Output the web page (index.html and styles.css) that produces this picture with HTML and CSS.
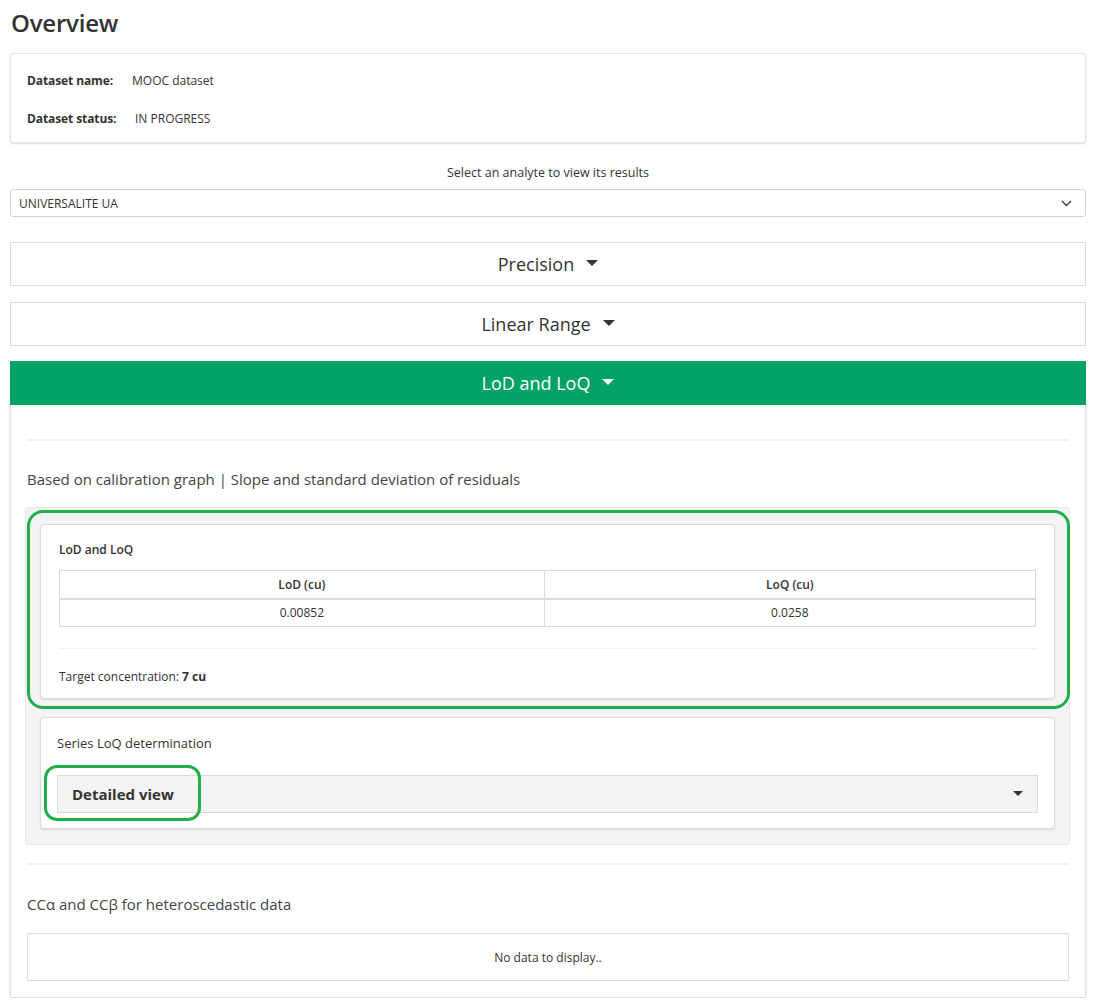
FILE: index.html
```html
<!DOCTYPE html>
<html>
<head>
<meta charset="utf-8">
<link rel="stylesheet" href="styles.css">
</head>
<body>
<div class="page">
  <h1 class="title">Overview</h1>

  <div class="card info">
    <div class="info-row"><span class="label">Dataset name:</span><span class="val">MOOC dataset</span></div>
    <div class="info-row"><span class="label">Dataset status:</span><span class="val val2">IN PROGRESS</span></div>
  </div>

  <div class="select-label">Select an analyte to view its results</div>
  <div class="select">
    <span>UNIVERSALITE UA</span>
    <svg class="chev" width="11" height="7" viewBox="0 0 11 7"><path d="M1 1 L5.5 5.5 L10 1" fill="none" stroke="#333" stroke-width="1.3"/></svg>
  </div>

  <div class="panel"><div class="panel-head">Precision <span class="caret"></span></div></div>
  <div class="panel"><div class="panel-head">Linear Range <span class="caret"></span></div></div>
  <div class="panel open">
    <div class="panel-head active">LoD and LoQ <span class="caret white"></span></div>
    <div class="panel-body">
      <hr class="sep">
      <div class="section-title">Based on calibration graph | Slope and standard deviation of residuals</div>
      <div class="well">
        <div class="box box1">
          <div class="box-title">LoD and LoQ</div>
          <table class="tbl">
            <thead><tr><th>LoD (cu)</th><th>LoQ (cu)</th></tr></thead>
            <tbody><tr><td>0.00852</td><td>0.0258</td></tr></tbody>
          </table>
          <hr class="sep small">
          <div class="target">Target concentration: <b>7 cu</b></div>
        </div>
        <div class="box box2">
          <div class="box-title2">Series LoQ determination</div>
          <div class="detail">
            <span>Detailed view</span>
            <span class="caret small"></span>
          </div>
          <div class="mark mark2"></div>
        </div>
        <div class="mark mark1"></div>
      </div>
      <hr class="sep sep2">
      <div class="section-title t2">CCα and CCβ for heteroscedastic data</div>
      <div class="nodata">No data to display..</div>
    </div>
  </div>
</div>
</body>
</html>
```

FILE: styles.css
```css
* { box-sizing: border-box; }
html, body { margin: 0; padding: 0; background: #fff; }
body {
  font-family: "Open Sans", "Noto Sans", sans-serif;
  color: #333;
}
.page { padding: 0 15px 0 10px; }
.title {
  font-size: 24px;
  font-weight: 600;
  margin: 0;
  padding: 5px 0 0 1px;
  height: 53px;
  line-height: 36px;
  letter-spacing: -0.2px;
}
.card {
  background: #fff;
  border: 1px solid #e4e4e4;
  border-radius: 4px;
  box-shadow: 0 1px 2px rgba(0,0,0,0.15);
}
.info { height: 90px; padding: 16px 16px 0 16px; }
.info-row { font-size: 12px; height: 38px; line-height: 22px; display: flex; }
.info-row .label { font-weight: 700; width: 105px; letter-spacing: -0.1px; }
.info-row .val2 { padding-left: 3px; }
.select-label {
  text-align: center;
  font-size: 12.5px;
  margin-top: 21px;
  height: 25px;
  line-height: 18px;
}
.select {
  height: 28px;
  border: 1px solid #d4d4d4;
  border-radius: 3px;
  display: flex;
  align-items: center;
  justify-content: space-between;
  padding: 0 13px 0 8px;
  font-size: 12px;
  color: #333;
}
.panel { margin-top: 25px; }
.panel + .panel { margin-top: 16px; }
.panel.open { margin-top: 15px; }
.panel-head {
  height: 44px;
  border: 1px solid #dcdcdc;
  background: #fff;
  display: flex;
  align-items: center;
  justify-content: center;
  font-size: 18px;
  color: #333;
}
.panel-head.active {
  background: #00a265;
  border-color: #00a265;
  color: #fff;
}
.caret {
  display: inline-block;
  width: 0; height: 0;
  border-left: 6px solid transparent;
  border-right: 6px solid transparent;
  border-top: 6px solid #333;
  margin-left: 12px;
  position: relative; top: -1px;
}
.caret.white { border-top-color: #fff; }
.caret.small { border-left-width: 5px; border-right-width: 5px; border-top-width: 5px; margin: 0; }
.panel-body {
  border: 1px solid #e0e0e0;
  border-top: none;
  box-shadow: 0 1px 2px rgba(0,0,0,0.12);
  padding: 34px 16px 16px 16px;
  height: 593px;
}
.sep { border: 0; border-top: 2px solid #f0f0f0; margin: 0; }
.sep.small { border-top-width: 1px; margin: 21px 0 0 0; }
.section-title {
  font-size: 15px;
  color: #444;
  margin-top: 26px;
  height: 40px;
  line-height: 24px;
}
.well {
  position: relative;
  background: #f4f4f4;
  border: 1px solid #e6e6e6;
  border-radius: 4px;
  padding: 16px 14px 15px 14px;
  margin-left: -2px;
  margin-right: -1px;
}
.box {
  position: relative;
  background: #fff;
  border: 1px solid #dadada;
  border-radius: 4px;
  box-shadow: 0 1px 2px rgba(0,0,0,0.12);
}
.box1 { padding: 15px 18px 12px 18px; height: 175px; }
.box2 { margin-top: 18px; padding: 16px 16px 16px 16px; height: 112px; }
.box-title { font-size: 12px; font-weight: 600; height: 30px; line-height: 20px; }
.box-title2 { font-size: 13px; font-weight: 500; height: 41px; line-height: 18px; }
.tbl {
  width: 100%;
  border-collapse: collapse;
  font-size: 12px;
}
.tbl th, .tbl td {
  border: 1px solid #dadada;
  text-align: center;
  height: 28px;
  padding: 0;
}
.tbl th { font-weight: 600; border-bottom-width: 2px; }
.target { font-size: 12px; margin-top: 19px; }
.detail {
  background: #f4f4f4;
  border: 1px solid #dadada;
  height: 38px;
  display: flex;
  align-items: center;
  justify-content: space-between;
  padding: 0 14px 0 14px;
  font-size: 15px;
  font-weight: 700;
}
.mark {
  position: absolute;
  border: 3px solid #22ae4b;
  pointer-events: none;
}
.mark1 { left: 1px; top: 2px; width: 1043px; height: 199px; border-radius: 16px; }
.mark2 { left: 3px; top: 47px; width: 157px; height: 56px; border-radius: 13px; }
.sep2 { margin-top: 18px; }
.t2 { margin-top: 27px; height: 41px; }
.nodata {
  border: 1px solid #dcdcdc;
  height: 48px;
  display: flex;
  align-items: center;
  justify-content: center;
  font-size: 12px;
}
```
